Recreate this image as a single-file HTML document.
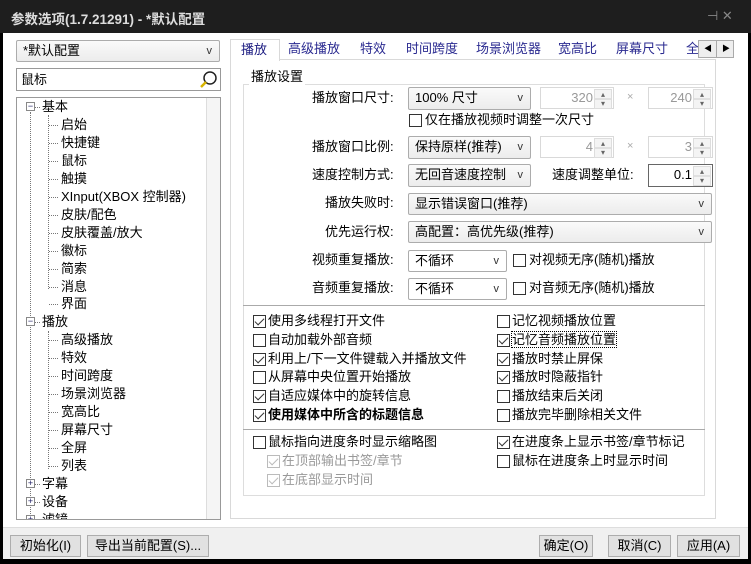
<!DOCTYPE html><html><head><meta charset="utf-8"><style>
*{box-sizing:border-box;margin:0;padding:0}
body{width:751px;height:564px;background:#000;position:relative;overflow:hidden;font:13px "Liberation Sans","Noto Sans CJK SC",sans-serif;color:#000}
.a{position:absolute;white-space:nowrap}
.t{line-height:16px}
.box{position:absolute;border:1px solid #adadad;background:#fff}
.cb{position:absolute;border:1px solid #acacac;background:linear-gradient(#fafafa,#ececec);border-radius:2px;padding-left:6px;line-height:20px}
.cb .v{position:absolute;right:7px;top:0;font-size:11px;color:#333}
.spin{position:absolute;border:1px solid #d9d9d9;background:#fff;color:#999;text-align:right;padding-right:20px;line-height:20px}
.spin:after{content:"▴\A▾";white-space:pre;font-size:8px;line-height:9px;text-align:center;color:#666;position:absolute;right:1px;top:1px;width:16px;height:18px;background:linear-gradient(#f4f4f4 0 48%,#ccc 48% 52%,#f4f4f4 52%);border:1px solid #ddd}
.ck{position:absolute;width:13px;height:13px;border:1px solid #333;background:#fff}
.ck.on:after{content:"";position:absolute;left:3px;top:0px;width:4px;height:8px;border:solid #333;border-width:0 1.5px 1.5px 0;transform:rotate(45deg)}
.ck.dis{border-color:#bbb}.ck.dis:after{border-color:#bbb}
.btn{position:absolute;border:1px solid #adadad;background:#e1e1e1;text-align:center;line-height:20px;height:22px}
.ti{position:absolute;left:0;line-height:18px}
.dot{position:absolute;border-top:1px dotted #777;width:9px}
.tab{position:absolute;top:41px;line-height:16px;color:#2a2a90}
</style></head><body>
<div class="a" style="left:0;top:0;width:751px;height:33px;background:#1e1e1e"></div>
<div class="a" style="left:11px;top:8px;color:#ddd;font-size:13.5px;font-weight:bold">参数选项(1.7.21291) - *默认配置</div>
<div class="a" style="left:707px;top:8px;color:#888;font-size:13px">⊣ ✕</div>
<div class="a" style="left:3px;top:33px;width:745px;height:526px;background:#fff"></div>
<div class="a" style="left:3px;top:527px;width:745px;height:32px;background:#f0f0f0;border-top:1px solid #ddd"></div>

<div class="cb" style="left:16px;top:40px;width:204px;height:22px">*默认配置<span class="v">v</span></div>
<div class="box" style="left:16px;top:68px;width:205px;height:23px;border-color:#999;padding-left:4px;line-height:21px">鼠标
<svg style="position:absolute;right:3px;top:2px" width="18" height="18"><circle cx="11" cy="7" r="6" fill="none" stroke="#222" stroke-width="1.5"/><line x1="7" y1="11" x2="2" y2="16" stroke="#d8b400" stroke-width="2.5"/></svg></div>
<div class="box" style="left:16px;top:97px;width:205px;height:423px;border-color:#999;overflow:hidden">
<div class="a" style="right:0;top:0;width:14px;height:421px;background:#f5f5f5;border-left:1px solid #ddd"></div>
<div class="a" style="left:13px;top:14px;height:410px;border-left:1px dotted #777"></div>
<div class="a" style="left:31px;top:17px;height:174px;border-left:1px dotted #777"></div>
<div class="a" style="left:31px;top:233px;height:138px;border-left:1px dotted #777"></div>
<div id="tree" class="a" style="left:0;top:0;width:190px"></div>
</div>

<div class="a" style="left:230px;top:59px;width:486px;height:460px;border:1px solid #d9d9d9"></div>
<div class="a" style="left:230px;top:39px;width:50px;height:22px;border:1px solid #d9d9d9;border-bottom:none;background:#fff"></div>
<div class="a t" style="left:241px;top:42px;color:#1a1a80">播放</div>
<div class="tab" style="left:288px">高级播放</div>
<div class="tab" style="left:360px">特效</div>
<div class="tab" style="left:406px">时间跨度</div>
<div class="tab" style="left:476px">场景浏览器</div>
<div class="tab" style="left:558px">宽高比</div>
<div class="tab" style="left:616px">屏幕尺寸</div>
<div class="tab" style="left:686px;width:12px;overflow:hidden">全</div>
<div class="a" style="left:698px;top:40px;width:36px;height:18px;border:1px solid #aaa;background:#eee;font-size:8px;line-height:16px"><span style="position:absolute;left:5px">◀</span><span style="position:absolute;left:1px;top:0;width:17px;height:16px;border-right:1px solid #aaa"></span><span style="position:absolute;left:23px">▶</span></div>

<div class="a" style="left:243px;top:84px;width:462px;height:412px;border:1px solid #ddd"></div>
<div class="a t" style="left:249px;top:69px;background:#fff;padding:0 2px">播放设置</div>
<div class="a" style="left:243px;top:305px;width:462px;border-top:1px solid #aaa"></div>
<div class="a" style="left:243px;top:429px;width:462px;border-top:1px solid #aaa"></div>

<div class="a t" style="left:312px;top:90px">播放窗口尺寸:</div>
<div class="cb" style="left:408px;top:87px;width:123px;height:23px">100% 尺寸<span class="v">v</span></div>
<div class="spin" style="left:540px;top:87px;width:74px;height:22px">320</div>
<div class="a" style="left:627px;top:91px;color:#aaa;font-size:11px">×</div>
<div class="spin" style="left:648px;top:87px;width:65px;height:22px">240</div>
<div class="ck" style="left:409px;top:114px"></div><div class="a t" style="left:425px;top:112px">仅在播放视频时调整一次尺寸</div>
<div class="a t" style="left:312px;top:139px">播放窗口比例:</div>
<div class="cb" style="left:408px;top:136px;width:123px;height:23px">保持原样(推荐)<span class="v">v</span></div>
<div class="spin" style="left:540px;top:136px;width:74px;height:22px">4</div>
<div class="a" style="left:627px;top:140px;color:#aaa;font-size:11px">×</div>
<div class="spin" style="left:648px;top:136px;width:65px;height:22px">3</div>
<div class="a t" style="left:312px;top:167px">速度控制方式:</div>
<div class="cb" style="left:408px;top:164px;width:123px;height:23px">无回音速度控制<span class="v">v</span></div>
<div class="a t" style="left:552px;top:167px">速度调整单位:</div>
<div class="spin" style="left:648px;top:164px;width:65px;height:23px;border-color:#666;color:#000">0.1</div>
<div class="a t" style="left:325px;top:195px">播放失败时:</div>
<div class="cb" style="left:408px;top:193px;width:304px;height:22px">显示错误窗口(推荐)<span class="v">v</span></div>
<div class="a t" style="left:325px;top:224px">优先运行权:</div>
<div class="cb" style="left:408px;top:221px;width:304px;height:22px">高配置：高优先级(推荐)<span class="v">v</span></div>
<div class="a t" style="left:312px;top:252px">视频重复播放:</div>
<div class="cb" style="left:408px;top:250px;width:99px;height:22px;background:#fff">不循环<span class="v">v</span></div>
<div class="ck" style="left:513px;top:254px"></div><div class="a t" style="left:529px;top:252px">对视频无序(随机)播放</div>
<div class="a t" style="left:312px;top:280px">音频重复播放:</div>
<div class="cb" style="left:408px;top:278px;width:99px;height:22px;background:#fff">不循环<span class="v">v</span></div>
<div class="ck" style="left:513px;top:282px"></div><div class="a t" style="left:529px;top:280px">对音频无序(随机)播放</div>

<div id="cks"></div>

<div class="btn" style="left:10px;top:535px;width:71px">初始化(I)</div>
<div class="btn" style="left:87px;top:535px;width:122px">导出当前配置(S)...</div>
<div class="btn" style="left:539px;top:535px;width:54px">确定(O)</div>
<div class="btn" style="left:608px;top:535px;width:63px">取消(C)</div>
<div class="btn" style="left:677px;top:535px;width:63px">应用(A)</div>
<script>
var items=[["基本",0],["启始",1],["快捷键",1],["鼠标",1],["触摸",1],["XInput(XBOX 控制器)",1],["皮肤/配色",1],["皮肤覆盖/放大",1],["徽标",1],["简索",1],["消息",1],["界面",1],["播放",0],["高级播放",1],["特效",1],["时间跨度",1],["场景浏览器",1],["宽高比",1],["屏幕尺寸",1],["全屏",1],["列表",1],["字幕",2],["设备",2],["滤镜",2]];
var h="";items.forEach(function(it,i){var y=i*17.95;var lv=it[1];
if(lv==1){h+='<div class="dot" style="left:32px;top:'+(y+9)+'px"></div><div class="ti" style="left:44px;top:'+y+'px">'+it[0]+'</div>';}
else{h+='<div class="a" style="left:9px;top:'+(y+4)+'px;width:9px;height:9px;border:1px solid #888;background:#fff;font-size:9px;line-height:7px;text-align:center;color:#226">'+(lv==0?'−':'+')+'</div><div class="dot" style="left:18px;top:'+(y+9)+'px;width:5px"></div><div class="ti" style="left:25px;top:'+y+'px">'+it[0]+'</div>';}});
document.getElementById('tree').innerHTML=h;
var c=[[253,321,1,"使用多线程打开文件"],[253,340,0,"自动加载外部音频"],[253,359,1,"利用上/下一文件键载入并播放文件"],[253,377,0,"从屏幕中央位置开始播放"],[253,396,1,"自适应媒体中的旋转信息"],[253,415,1,"<b>使用媒体中所含的标题信息</b>"],
[497,321,0,"记忆视频播放位置"],[497,340,1,"<span style='outline:1px dotted #000'>记忆音频播放位置</span>"],[497,359,1,"播放时禁止屏保"],[497,377,1,"播放时隐蔽指针"],[497,396,0,"播放结束后关闭"],[497,415,0,"播放完毕删除相关文件"],
[253,442,0,"鼠标指向进度条时显示缩略图"],[267,461,2,"在顶部输出书签/章节"],[267,480,2,"在底部显示时间"],[497,442,1,"在进度条上显示书签/章节标记"],[497,461,0,"鼠标在进度条上时显示时间"]];
var s="";c.forEach(function(k){s+='<div class="ck'+(k[2]?' on':'')+(k[2]==2?' dis':'')+'" style="left:'+k[0]+'px;top:'+(k[1]-6)+'px"></div><div class="a t" style="left:'+(k[0]+15)+'px;top:'+(k[1]-8)+'px;'+(k[2]==2?'color:#999':'')+'">'+k[3]+'</div>';});
document.getElementById('cks').innerHTML=s;
</script>
</body></html>
